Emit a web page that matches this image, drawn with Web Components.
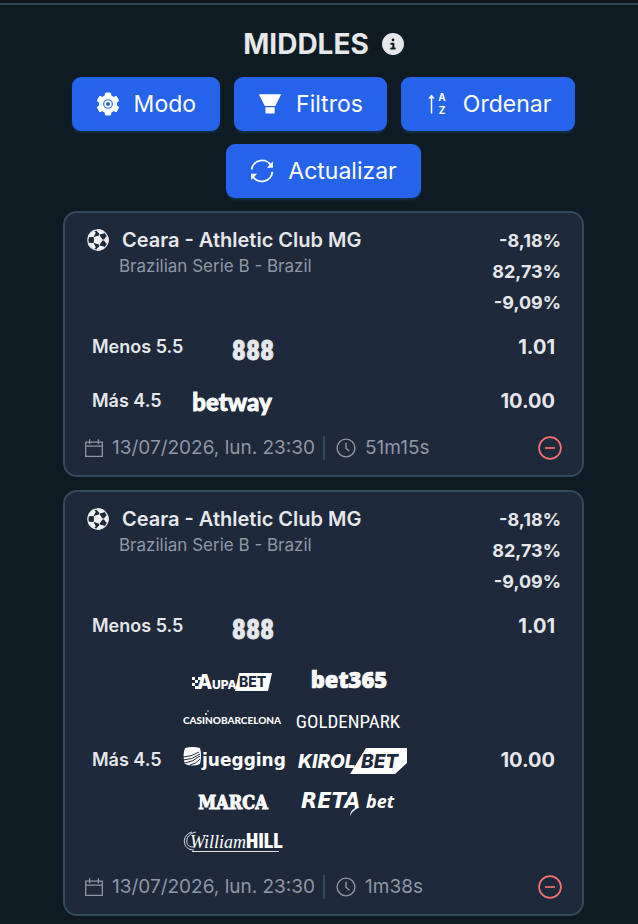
<!DOCTYPE html>
<html lang="es">
<head>
<meta charset="utf-8">
<meta name="viewport" content="width=device-width, initial-scale=1">
<title>Middles</title>
<style>
  body { margin: 0; background: #0f1b23; color: #e5e7eb; font-family: Inter, "Liberation Sans", sans-serif; }
</style>
</head>
<body>
<middles-page>
  <span slot="title">MIDDLES</span>
  <tool-button slot="tools" icon="gear">Modo</tool-button>
  <tool-button slot="tools" icon="filter">Filtros</tool-button>
  <tool-button slot="tools" icon="sort">Ordenar</tool-button>
  <tool-button slot="tools" icon="sync">Actualizar</tool-button>

  <event-card>
    <span slot="name">Ceara - Athletic Club MG</span>
    <span slot="league">Brazilian Serie B - Brazil</span>
    <span slot="stat">-8,18%</span><span slot="stat">82,73%</span><span slot="stat">-9,09%</span>
    <bet-row><span slot="label">Menos 5.5</span><book-logo name="888"></book-logo><span slot="odds">1.01</span></bet-row>
    <bet-row><span slot="label">Más 4.5</span><book-logo name="betway"></book-logo><span slot="odds">10.00</span></bet-row>
    <span slot="date">13/07/2026, lun. 23:30</span>
    <span slot="age">51m15s</span>
  </event-card>

  <event-card>
    <span slot="name">Ceara - Athletic Club MG</span>
    <span slot="league">Brazilian Serie B - Brazil</span>
    <span slot="stat">-8,18%</span><span slot="stat">82,73%</span><span slot="stat">-9,09%</span>
    <bet-row><span slot="label">Menos 5.5</span><book-logo name="888"></book-logo><span slot="odds">1.01</span></bet-row>
    <bet-row><span slot="label">Más 4.5</span>
      <book-logo name="aupabet"></book-logo><book-logo name="bet365"></book-logo>
      <book-logo name="casino"></book-logo><book-logo name="goldenpark"></book-logo>
      <book-logo name="juegging"></book-logo><book-logo name="kirolbet"></book-logo>
      <book-logo name="marca"></book-logo><book-logo name="retabet"></book-logo>
      <book-logo name="williamhill"></book-logo>
      <span slot="odds">10.00</span></bet-row>
    <span slot="date">13/07/2026, lun. 23:30</span>
    <span slot="age">1m38s</span>
  </event-card>
</middles-page>

<script>
const ICONS = {
  info: ['0 0 512 512', '<path fill="currentColor" d="M256 512A256 256 0 1 0 256 0a256 256 0 1 0 0 512zM216 336h24V272H216c-13.3 0-24-10.7-24-24s10.7-24 24-24h48c13.3 0 24 10.7 24 24v88h8c13.3 0 24 10.7 24 24s-10.7 24-24 24H216c-13.3 0-24-10.7-24-24s10.7-24 24-24zm40-208a32 32 0 1 1 0 64 32 32 0 1 1 0-64z"/>'],
  gear: ['0 0 24 24', '<g fill="#fff"><circle cx="12" cy="12" r="9.2"/><rect x="8.8" y=".5" width="6.4" height="23" rx="1.6"/><rect x="8.8" y=".5" width="6.4" height="23" rx="1.6" transform="rotate(60 12 12)"/><rect x="8.8" y=".5" width="6.4" height="23" rx="1.6" transform="rotate(120 12 12)"/></g><circle cx="12" cy="12" r="4.3" fill="#fff" stroke="#2563eb" stroke-width="1.1"/><circle cx="12" cy="12" r="2" fill="#2563eb"/>'],
  filter: ['0 0 24 24', '<path fill="#fff" d="M.8 2.3h22.4L17.3 14H6.8zM7.500 15.300h9.200v6.200H7.500z"/>'],
  sort: ['0 0 24 24', '<path d="M6.5 21.600V4.500" stroke="#fff" stroke-width="1.5"/><path d="M3.200 6.600 6.500 2.600l3.300 4z" fill="#fff"/><g fill="#fff" font-family="Inter, sans-serif" font-size="10" font-weight="700" text-anchor="middle"><text x="17" y="9">A</text><text x="17" y="22">Z</text></g>'],
  sync: ['0 0 24 24', '<g fill="none" stroke="#fff" stroke-width="1.8"><path d="M1.6 10.5A10.6 10.6 0 0 1 21.4 7M22.4 12.8A10.6 10.6 0 0 1 2.6 17"/></g><path fill="#fff" d="M22.9 2.600v6.200h-6zM1.100 21v-6.200h6z"/>'],
  ball: ['0 0 24 24', '<defs><clipPath id="b"><circle cx="12" cy="12" r="11.6"/></clipPath></defs><g clip-path="url(#b)" fill="#f4f5f7"><path d="M17.400 12l-3.700 5.200-6.200-2V8.800l6.200-2z"/><g stroke="#f4f5f7" stroke-width="1"><path d="M17 12h4M13.5 16.8l1.3 4M7.9 14.9l-4 2.9M7.900 9.100l-4-2.900M13.500 7.200l1.300-4"/></g><path d="M18.300 12l2.700-4 3 1v6l-3 1z"/><path d="M14 18.200l4.500 1 .5 4-7 2-1.500-3.400z"/><path d="M7 15.400l2.600 4.400L6 24 0 19l2-4z"/><path d="M7 8.600l2.600-4.400L6 0 0 5l2 4z"/><path d="M14 5.800l4.500-1 .5-4-7-2-1.500 3.400z"/></g><circle cx="12" cy="12" r="11.1" fill="none" stroke="#e5e7eb" stroke-width="1.300"/>'],
  calendar: ['0 0 20 20', '<g fill="none" stroke="currentColor" stroke-width="1.3"><path d="M1.7 4.2h16.6v14.1H1.7zM1.7 8.2h16.6M5.6 1.2v5M14.4 1.2v5"/></g>'],
  clock: ['0 0 20 20', '<g fill="none" stroke="currentColor" stroke-width="1.4"><circle cx="10" cy="10" r="8.9"/><path d="M10 4.8v5.4l3.4 3"/></g>'],
  minus: ['0 0 24 24', '<g fill="none" stroke="currentColor" stroke-width="1.7"><circle cx="12" cy="12" r="10.9"/><path d="M7 12h10"/></g>']
};

/* Each mark is drawn on a 100 x 40 board, white on transparent. */
const LOGOS = {
  '888': '<text x="50" y="33" text-anchor="middle" font-family="Roboto Condensed, Roboto, sans-serif" font-size="28" font-weight="700" fill="#e5e7eb" stroke="#e5e7eb" stroke-width="1">888</text>',
  betway: '<text x="50" y="30" text-anchor="middle" font-family="Lato, sans-serif" font-size="24" font-weight="900" stroke="#fff" stroke-width=".8">betway</text>',
  aupabet: '<path d="M57 13h33l-4 18H53z"/><g font-family="Inter, sans-serif" font-weight="800"><text x="15" y="29" font-size="20">A</text><text x="30" y="29" font-size="12">UPA</text><text x="57" y="27" font-size="14" fill="#1e293b">BET</text></g><path d="M10 17h3v3h-3zM13 20h3v3h-3zM10 23h3v3h-3zM16 17h3v3h-3zM13 26h3v3h-3z"/>',
  bet365: '<text x="51" y="28" text-anchor="middle" font-family="Open Sans, sans-serif" font-size="22" font-weight="800" stroke="#fff" stroke-width=".7">bet365</text>',
  casino: '<text x="50" y="24" text-anchor="middle" font-family="Lato, sans-serif" font-size="10" font-weight="900">CASINOBARCELONA</text><circle cx="24" cy="14" r="1"/><circle cx="26" cy="11" r=".8"/>',
  goldenpark: '<text x="50" y="28" text-anchor="middle" font-family="Roboto Condensed, Roboto, sans-serif" font-size="19" font-weight="400">GOLDENPARK</text>',
  juegging: '<path d="M3 8q8-2 15 0 2 7 0 16-7 3-15 0-3-8 0-16z"/><g stroke="#1e293b" fill="none" stroke-width="1"><path d="M1 17q8 0 16-5M1 20q9 0 17-6M3 23q8-1 15-7M8 25q6-1 10-6"/></g><text x="20" y="26" font-family="DejaVu Sans, sans-serif" font-size="17" font-weight="700">juegging</text>',
  kirolbet: '<path d="M68 8h41v15L97 34H52z"/><g font-family="Inter, sans-serif" font-size="19" font-weight="800" font-style="italic"><text x="0" y="28">KIROL</text><text x="63" y="28" fill="#1e293b">BET</text></g>',
  marca: '<text x="51" y="29" text-anchor="middle" font-family="DejaVu Serif Condensed, DejaVu Serif, serif" font-size="18" font-weight="700" stroke="#fff" stroke-width="1">MARCA</text>',
  retabet: '<text x="3" y="28" font-family="DejaVu Sans, sans-serif" font-style="italic" font-size="21" font-weight="700">RETA</text><path d="M57 28h3q-6 3-8 8 0-5 5-8z"/><text x="68" y="28" font-family="Open Sans, sans-serif" font-style="italic" font-size="18" font-weight="700">bet</text>',
  williamhill: '<text x="8" y="28" font-family="Liberation Serif, serif" font-size="18" font-style="italic">William</text><text x="64" y="28" font-family="Roboto Condensed, Roboto, sans-serif" font-size="20" font-weight="900">HILL</text><g fill="none" stroke="#dde0e6" stroke-width="1"><path d="M10 12C-1 15 0 30 12 30M14 12C2 14 2 28 12 27M10 31.500h87"/></g>'
};

class Base extends HTMLElement {
  constructor() { super(); this.attachShadow({ mode: 'open' }); }
  connectedCallback() { this.shadowRoot.innerHTML = this.render(); }
}

customElements.define('ui-icon', class extends Base {
  render() {
    const [box, art] = ICONS[this.getAttribute('name')];
    return `<style>:host{display:inline-flex;flex:none;width:var(--size,24px);height:var(--size,24px)}svg{width:100%;height:100%;display:block}</style><svg viewBox="${box}" aria-hidden="true">${art}</svg>`;
  }
});

customElements.define('book-logo', class extends Base {
  render() {
    return `<style>:host{display:block;flex:none;width:100px;height:40px}svg{width:100%;height:100%;display:block;overflow:visible}</style><svg viewBox="0 0 100 40" fill="#fff">${LOGOS[this.getAttribute('name')]}</svg>`;
  }
});

customElements.define('tool-button', class extends Base {
  render() {
    return `<style>
      :host{display:block}
      button{display:flex;align-items:center;gap:14px;height:54px;padding:0 24px;border:0;border-radius:9px;background:#2563eb;color:#fff;font:400 23px/32px Inter,"Liberation Sans",sans-serif;box-shadow:0 2px 2px #14304a;cursor:pointer}
    </style><button type="button"><ui-icon name="${this.getAttribute('icon')}"></ui-icon><slot></slot></button>`;
  }
});

customElements.define('bet-row', class extends Base {
  render() {
    return `<style>
      :host{display:flex;align-items:center;gap:20px;padding:7px 27px}
      .label{font-size:18px;line-height:24px;font-weight:600;white-space:nowrap}
      .books{display:flex;flex-wrap:wrap;column-gap:16px;max-width:216px}
      .odds{margin-left:auto;font-size:20px;line-height:24px;font-weight:700}
    </style><div class="label"><slot name="label"></slot></div><div class="books"><slot></slot></div><div class="odds"><slot name="odds"></slot></div>`;
  }
});

customElements.define('event-card', class extends Base {
  render() {
    return `<style>
      :host{display:block;border:2px solid #34495b;border-radius:14px;background:#1e293b;padding:12px 0 7px}
      header{display:flex;justify-content:space-between;padding:0 21px 2px 22px}
      .top{display:flex;align-items:center;gap:13px;height:30px}
      .top ui-icon{--size:22px}
      h2{margin:0;font-size:20px;line-height:28px;font-weight:600}
      p{margin:0;padding-left:32px;color:#9097a5;font-size:17px;line-height:22px}
      .stats{display:flex;flex-direction:column;align-items:flex-end;font-size:18px;line-height:31px;font-weight:700}
      footer{display:flex;align-items:center;height:40px;padding:0 20px 0 19px;color:#9097a5;font-size:19px;line-height:24px}
      footer ui-icon{--size:20px}
      .date{display:flex;align-items:center;gap:8px;padding-right:8px;border-right:2px solid #34495b}
      .age{display:flex;align-items:center;gap:9px;padding-left:11px}
      button{display:flex;margin-left:auto;padding:0;border:0;background:none;color:#f87171;cursor:pointer}
      button ui-icon{--size:24px}
    </style>
    <header>
      <div><div class="top"><ui-icon name="ball"></ui-icon><h2><slot name="name"></slot></h2></div><p><slot name="league"></slot></p></div>
      <div class="stats"><slot name="stat"></slot></div>
    </header>
    <slot></slot>
    <footer>
      <div class="date"><ui-icon name="calendar"></ui-icon><slot name="date"></slot></div>
      <div class="age"><ui-icon name="clock"></ui-icon><slot name="age"></slot></div>
      <button type="button" aria-label="Ocultar"><ui-icon name="minus"></ui-icon></button>
    </footer>`;
  }
});

customElements.define('middles-page', class extends Base {
  render() {
    return `<style>
      :host{display:block;border-top:3px solid #0c151b}
      main{display:flex;flex-direction:column;gap:13px;border-top:2px solid #334453;padding:19px 54px 7px 63px}
      h1{display:flex;justify-content:center;align-items:center;gap:13px;margin:0;font-size:28px;line-height:40px;font-weight:700}
      h1 ui-icon{--size:22px}
      nav{display:flex;flex-wrap:wrap;justify-content:center;gap:13px 14px}
    </style>
    <main><h1><slot name="title"></slot><ui-icon name="info"></ui-icon></h1><nav><slot name="tools"></slot></nav><slot></slot></main>`;
  }
});
</script>
</body>
</html>
